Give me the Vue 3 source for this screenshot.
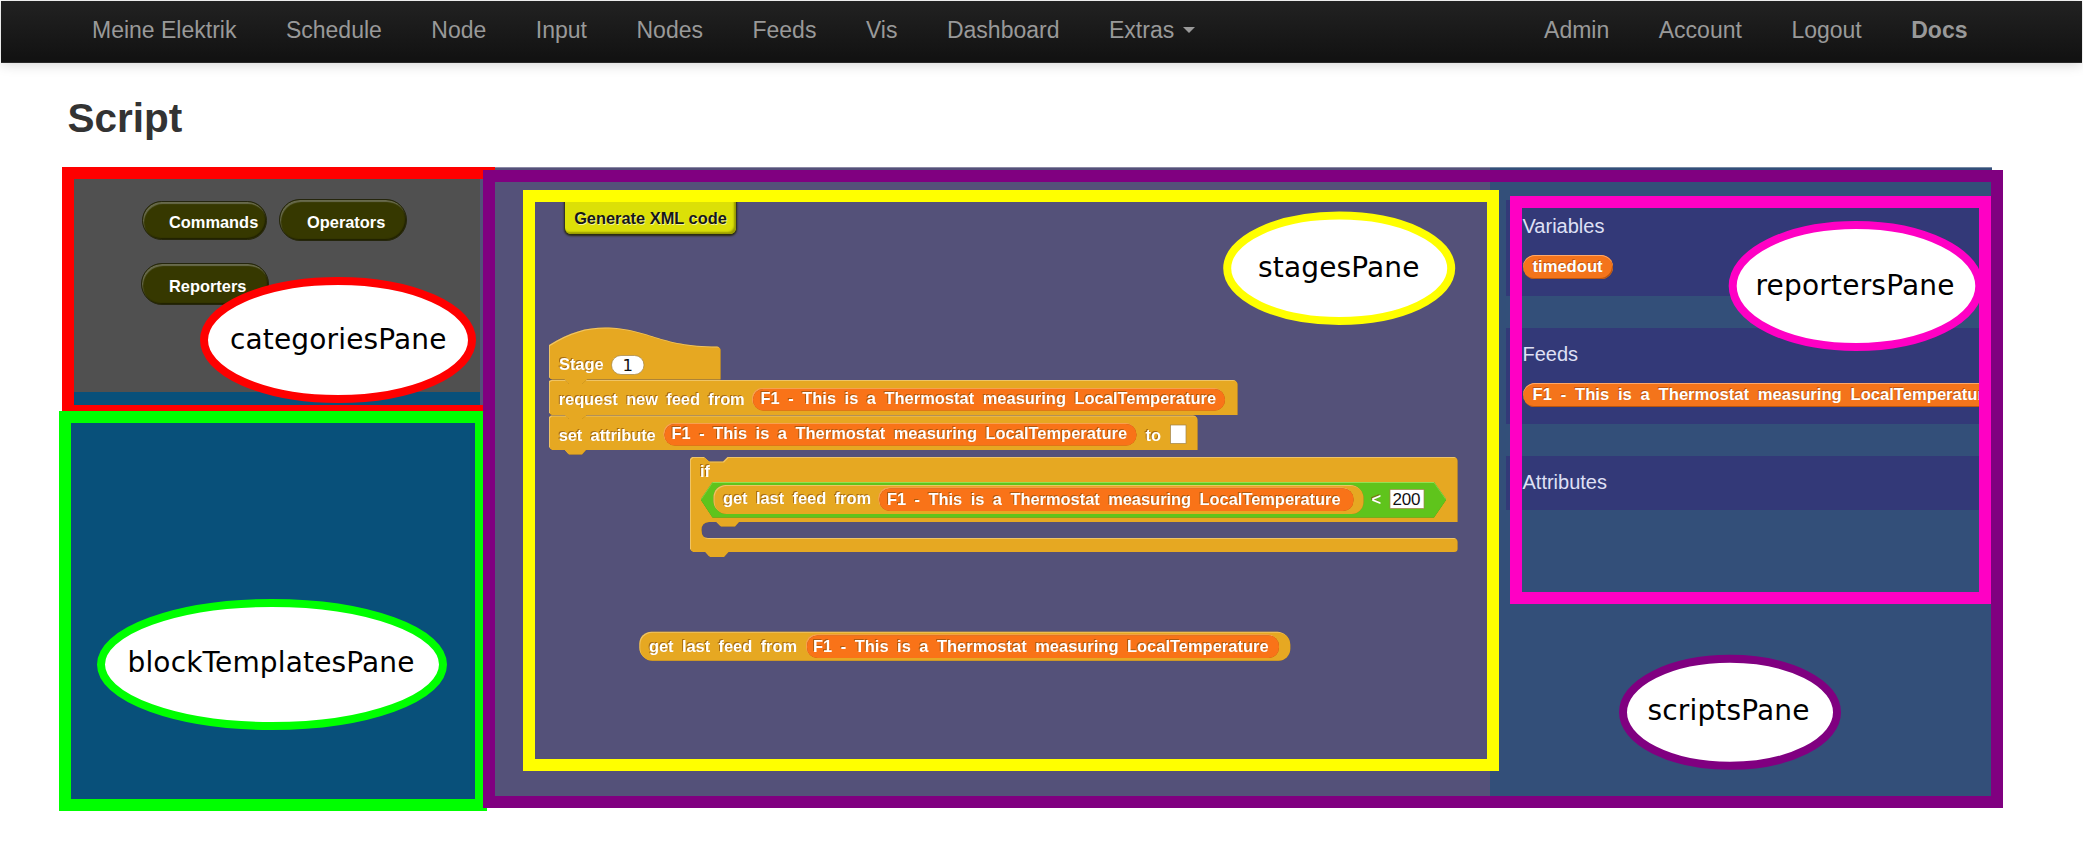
<script setup>
const leftNav = ['Meine Elektrik', 'Schedule', 'Node', 'Input', 'Nodes', 'Feeds', 'Vis', 'Dashboard', 'Extras']
const rightNav = ['Admin', 'Account', 'Logout', 'Docs']
const feed = 'F1 - This is a Thermostat measuring LocalTemperature'

// x / y are the top-left corner of the pill, tx / ty the start of its text baseline
const feedPills = [
  { x: 753, y: 389, w: 472, h: 21.5, tx: 760.5, ty: 404, tw: 455.5 },
  { x: 664.5, y: 424, w: 472, h: 21.5, tx: 671.5, ty: 439.2, tw: 455.5 },
  { x: 879.5, y: 488.5, w: 474, h: 22.5, tx: 887, ty: 504.6, tw: 453.5 },
  { x: 807, y: 635.5, w: 472, h: 22.5, tx: 813, ty: 652.1, tw: 455.5 },
]
const labels = [
  { t: 'Stage', x: 559, y: 369.6, w: 44.5 },
  { t: 'request new feed from', x: 558.7, y: 405.4, w: 186 },
  { t: 'set attribute', x: 558.7, y: 440.6, w: 97 },
  { t: 'to', x: 1145.5, y: 440.6, w: 15.5 },
  { t: 'if', x: 700, y: 477.2, w: 10 },
  { t: 'get last feed from', x: 723, y: 504.2, w: 148 },
  { t: '<', x: 1371.5, y: 504.6, w: 9.6 },
  { t: 'get last feed from', x: 649, y: 652.1, w: 148 },
]
const frames = [
  { c: '#ff0000', x: 68, y: 173, w: 421, h: 238 },
  { c: '#00ff00', x: 65, y: 417, w: 416, h: 388 },
  { c: '#800080', x: 489, y: 176, w: 1508, h: 626 },
  { c: '#ffff00', x: 529, y: 196, w: 964, h: 569 },
  { c: '#ff00c4', x: 1516, y: 202, w: 469, h: 396 },
]
const callouts = [
  { c: '#ff0000', t: 'categoriesPane', cx: 338, cy: 340, rx: 134, ry: 59, tx: 230, ty: 348.6, w: 216.5 },
  { c: '#00ff00', t: 'blockTemplatesPane', cx: 272, cy: 664.5, rx: 171, ry: 61.5, tx: 127.5, ty: 672.2, w: 287 },
  { c: '#ffff00', t: 'stagesPane', cx: 1339.2, cy: 268.3, rx: 112, ry: 52.7, tx: 1258, ty: 276.5, w: 161.5 },
  { c: '#ff00c4', t: 'reportersPane', cx: 1856, cy: 286, rx: 123.3, ry: 61, tx: 1755.5, ty: 294.7, w: 199 },
  { c: '#800080', t: 'scriptsPane', cx: 1730, cy: 712.3, rx: 107, ry: 53.5, tx: 1647.5, ty: 720.4, w: 162 },
]
</script>

<template>
  <div class="page">
    <nav class="navbar">
      <ul class="nav">
        <li v-for="n in leftNav" :key="n">{{ n }}<i v-if="n === 'Extras'" class="caret"></i></li>
      </ul>
      <ul class="nav">
        <li v-for="n in rightNav" :key="n" :class="{ strong: n === 'Docs' }">{{ n }}</li>
      </ul>
    </nav>
    <h1>Script</h1>

    <main class="workspace">
      <section class="side">
        <div class="categories">
          <button class="cat short">Commands</button>
          <button class="cat">Operators</button>
          <button class="cat lower">Reporters</button>
        </div>
        <div class="templates"></div>
      </section>
      <section class="stages">
        <button class="generate">Generate XML code</button>
      </section>
      <section class="scripts">
        <div class="group">
          <h2>Variables</h2>
          <span class="pill">timedout</span>
        </div>
        <div class="group">
          <h2>Feeds</h2>
          <span class="pill">{{ feed }}</span>
        </div>
        <div class="group empty">
          <h2>Attributes</h2>
        </div>
      </section>
    </main>

    <svg class="overlay" viewBox="0 0 2083 864" width="2083" height="864">
      <g class="block">
        <path d="M550 418 L552 416.600 H1194 Q1197.500 416.600 1197.500 420 V450 H586 L582 454.500 H569 L565 450 H552 L550 448 Z" />
        <path d="M550 382 L552 381 H1234 Q1237.500 381 1237.500 384.500 V415 H587 L582 419 H569 L565 415 H552 L550 414 Z" />
        <path d="M550 346 C571 333 587 328.500 606 328.500 C650 329 659 347.500 718 347.500 Q720.500 347.500 720.500 350 V379.500 H587 L582 384 H569 L565 379.500 H552 L550 378.500 Z" />
        <path d="M691 460 L693 458 H705 L710 462.500 H724 L728.500 458 H1455 Q1457.500 458 1457.500 461 V522 H739 L735 526.500 H721 L716.500 522 H709 Q701.500 522.500 701.500 530 Q701.500 539 709 539 H1455 Q1457.500 539 1457.500 542 V549 Q1457.500 552 1454 552 H728.500 L724 557 H710 L705.500 552 H693 L691 550 Z" />
      </g>
      <path class="hex" d="M712.500 483 H1434 L1446 500 L1434 517.500 H712.500 L701 500 Z" />
      <g class="block">
        <rect x="714.500" y="486" width="649" height="28" rx="12" />
        <rect x="640.300" y="632.700" width="650" height="28" rx="12" />
      </g>
      <g class="feed">
        <rect v-for="(p, i) in feedPills" :key="i" :x="p.x" :y="p.y" :width="p.w" :height="p.h" rx="10.5" />
      </g>
      <rect class="slot" x="611.500" y="355.500" width="32.500" height="19" rx="9.500" />
      <rect class="slot" x="1170.500" y="425" width="15.500" height="18.500" />
      <rect class="slot" x="1390" y="489.500" width="34" height="19" />
      <g class="label">
        <text v-for="(p, i) in feedPills" :key="'f' + i" :x="p.tx" :y="p.ty" :textLength="p.tw">{{ feed }}</text>
        <text v-for="(l, i) in labels" :key="'l' + i" :x="l.x" :y="l.y" :textLength="l.w">{{ l.t }}</text>
      </g>
      <g class="value">
        <text x="622.500" y="370.500">1</text>
        <text x="1392.500" y="505" textLength="28">200</text>
      </g>

      <rect v-for="f in frames" :key="f.c" class="frame" :x="f.x" :y="f.y" :width="f.w" :height="f.h" :stroke="f.c" />
      <g v-for="c in callouts" :key="c.t">
        <ellipse class="bubble" :cx="c.cx" :cy="c.cy" :rx="c.rx" :ry="c.ry" :stroke="c.c" />
        <text class="note" :x="c.tx" :y="c.ty" :textLength="c.w">{{ c.t }}</text>
      </g>
    </svg>
  </div>
</template>

<style>
body { margin: 0; background: #fff; overflow: hidden; }
</style>

<style scoped>
.page { position: relative; width: 2083px; height: 864px; overflow: hidden; background: #fff; font-family: "Liberation Sans", Arial, sans-serif; }
.navbar { box-sizing: border-box; height: 62px; margin: 1px 1px 0; padding: 0 114.500px 0 91px; display: flex; justify-content: space-between; background: linear-gradient(#222, #111); border-bottom: 1px solid #2a2a2a; box-shadow: 0 1px 12px rgba(0, 0, 0, .18); }
.nav { display: flex; gap: 49.500px; margin: 0; padding: 0; list-style: none; color: #999; font-size: 23px; line-height: 58px; white-space: nowrap; }
.nav .strong { font-weight: bold; }
.caret { display: inline-block; margin-left: 9px; vertical-align: 5px; border: 6.500px solid transparent; border-top-color: #999; border-bottom: 0; }
h1 { margin: 33px 0 0 67.500px; height: 71px; font-size: 40.500px; line-height: 45px; color: #333; }
.workspace { display: grid; grid-template-columns: 410px 1010px 502px; width: 1922px; height: 632px; margin-left: 70px; }
.side { display: grid; grid-template-rows: 225px 1fr; }
.categories { box-sizing: border-box; display: grid; grid-template-columns: 128px 128px; grid-template-rows: 42px 42px; align-items: center; column-gap: 10px; row-gap: 22px; padding: 32px 0 0 71px; background: #505050; }
.cat { box-sizing: border-box; width: 128px; height: 42px; padding: 3px 0 0 27px; border: 1px solid #25260d; border-radius: 21px; background: #363800; box-shadow: inset 1px 2px 1px #686a4c, inset -1px -1px 1px #202100; color: #fff; font: bold 16.400px/18px "Liberation Sans", Arial, sans-serif; text-align: left; }
.cat.short { width: 125px; height: 39px; margin-left: 1px; padding-left: 26px; }
.templates { background: #08507a; }
.stages { background: #545179; border-top: 1px solid #8b88a5; }
.generate { box-sizing: border-box; display: block; width: 171px; height: 41px; margin: 25px 0 0 85px; padding: 8px 0 0; border: 0; border-radius: 6px; background: #dce007; box-shadow: 0 1px 2px 1px #292910, inset -2px -2px 2px #969900; color: #171717; font: bold 16.400px/22px "Liberation Sans", Arial, sans-serif; text-align: center; text-shadow: 1px 1px #f2f3a0; }
.scripts { box-sizing: border-box; display: flex; flex-direction: column; gap: 32px; padding: 32px 0 0 16px; background: #334f79; border-top: 1px solid #7688a4; overflow: hidden; }
.group { box-sizing: border-box; height: 96px; padding: 15px 0 0 16.500px; background: #333978; }
.group.empty { height: 54px; }
h2 { margin: 0 0 17px; font-size: 20px; line-height: 23px; font-weight: normal; color: #dfe0f5; }
.pill { display: block; box-sizing: border-box; width: max-content; height: 24px; padding: 0 10px; border-radius: 12px; background: #f4741b; box-shadow: inset 0 1px #ffa868, inset -1px -1px #b9560f; color: #fff; font-size: 16.600px; line-height: 24px; font-weight: bold; word-spacing: 4.200px; white-space: nowrap; text-shadow: -1px -1px #bd5610; }
.overlay { position: absolute; left: 0; top: 0; }
.block > * { fill: #e6a822; filter: drop-shadow(-.7px -.7px 0 #efc465) drop-shadow(.7px .8px 0 #946c1c); }
.hex { fill: #5fc41c; filter: drop-shadow(0 -.8px 0 #93e052) drop-shadow(0 .9px 0 #3e8010); }
.feed { fill: #f97318; filter: drop-shadow(.6px .8px 0 #a84b0c) drop-shadow(-.3px -.6px 0 #f7a050); }
.slot { fill: #fff; stroke: #a08448; stroke-width: .7px; }
.label { fill: #fff; font: bold 16.400px "Liberation Sans", Arial, sans-serif; word-spacing: 3.900px; filter: drop-shadow(-.8px -.8px 0 rgba(130, 75, 10, .65)); }
.value { fill: #111; font: 16.500px "DejaVu Sans", sans-serif; }
.value text:last-child { font: 17px "Liberation Sans", Arial, sans-serif; }
.frame { fill: none; stroke-width: 12px; }
.bubble { fill: #fff; stroke-width: 8px; }
.note { fill: #000; font: 28px "DejaVu Sans", sans-serif; }
</style>
